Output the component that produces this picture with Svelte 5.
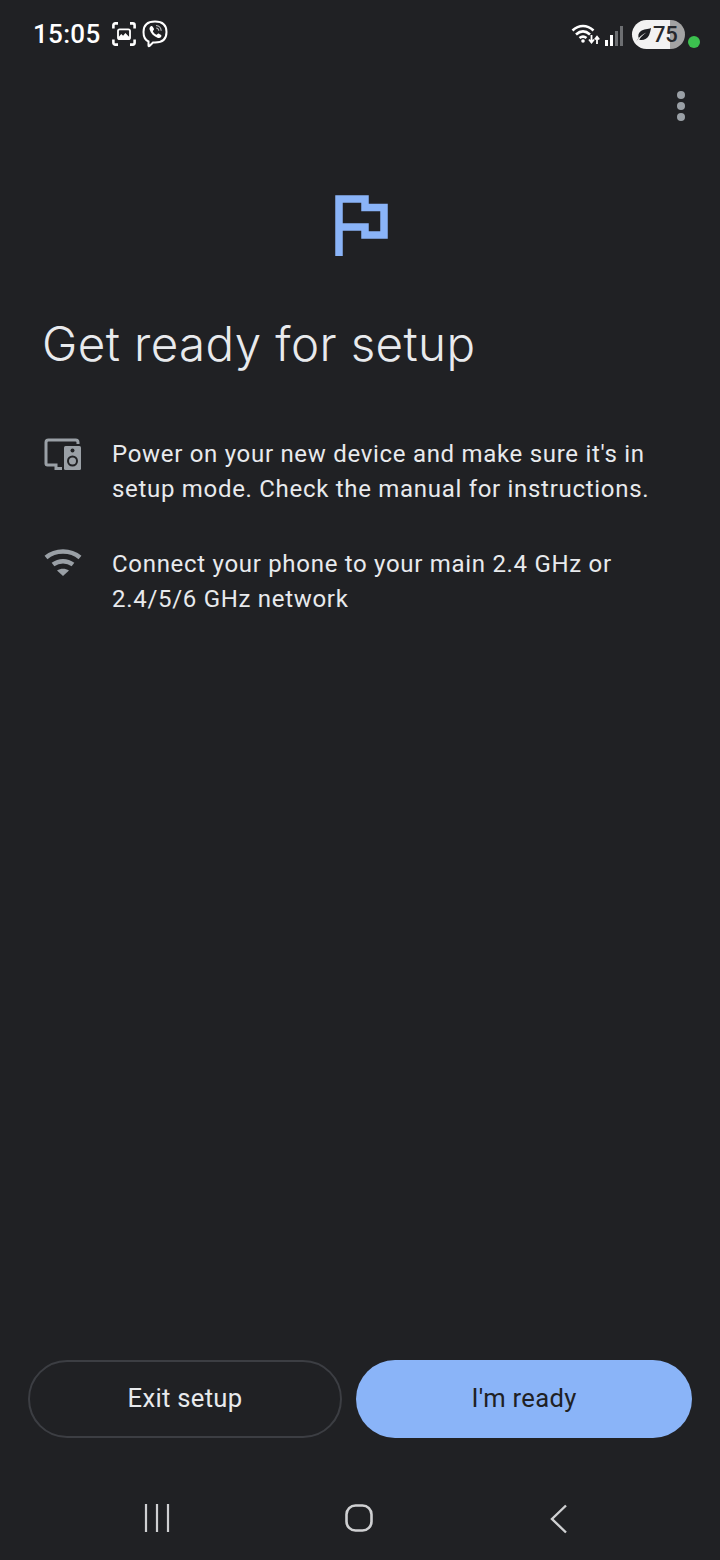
<script lang="ts">
	const steps = [
		{ icon: "device", lines: ["Power on your new device and make sure it's in", "setup mode. Check the manual for instructions."] },
		{ icon: "wifi", lines: ["Connect your phone to your main 2.4 GHz or", "2.4/5/6 GHz network"] },
	];
</script>

<div class="page">
	<header class="status">
		<div class="status-left">
			<span class="time">15:05</span>
			<svg class="ic-shot" width="24" height="24" viewBox="0 0 26 26" fill="none">
				<path d="M1.500 7V3.500a2 2 0 0 1 2-2H6.500M19.500 1.500h3a2 2 0 0 1 2 2V7M24.500 19v3.500a2 2 0 0 1-2 2h-3M6.500 24.500h-3a2 2 0 0 1-2-2V19" stroke="#fff" stroke-width="2.800" />
				<rect x="6.500" y="8" width="13" height="10.500" rx="1.800" stroke="#fff" stroke-width="2" />
				<path d="M6.500 17l3.500-4 2 2 2.500-3 5 5v1.500h-13z" fill="#fff" />
			</svg>
			<svg class="ic-viber" width="26" height="28" viewBox="0 0 26 28" fill="none">
				<path d="M13 1.500c6.800 0 11.500 3 11.500 10.500 0 7-4.500 10.500-11.500 10.500h-2l-3.500 3.500c-.6.500-1 .2-1-.5v-4C3 20 1.500 16.500 1.500 12 1.500 4.500 6.200 1.500 13 1.500z" stroke="#fff" stroke-width="2" />
				<path d="M8.500 6.500c1-.8 1.800-.5 2.400.5l.9 1.500c.4.800.2 1.300-.5 1.900-.5.400-.5.900-.1 1.600.7 1.200 1.600 2 2.700 2.600.6.300 1 .2 1.400-.3.600-.7 1.200-.9 2-.4l1.400.9c.9.600 1 1.300.3 2.200-.8 1-1.800 1.300-3 .9-4.200-1.500-7.200-4.400-8.400-8.400-.3-1.200.1-2.200.9-3z" fill="#fff" />
				<path d="M14 5.500c3 .2 5 2.200 5.200 5.300M14.200 8c1.600.1 2.500 1.100 2.600 2.700" stroke="#b9babc" stroke-width="1.200" />
			</svg>
		</div>
		<div class="status-right">
			<svg class="ic-wifi-small" width="29" height="24" viewBox="0 0 29 24" fill="none">
				<path d="M1.500 8.500C8 2.500 16 2.500 22.500 8.500M5 12.500c4.500-4 9.500-4 14 0M8.500 16c2.500-2 4.500-2 7 0" stroke="#fff" stroke-width="2.600" />
				<circle cx="12" cy="19" r="1.800" fill="#fff" />
				<path d="M20.500 13v7M18 17.500l2.500 3 2.500-3M26 22v-7M23.800 17.500l2.200-2.800 2.200 2.800" stroke="#fff" stroke-width="1.800" />
			</svg>
			<div class="signal">
				<span class="bar on" style="height:6px"></span>
				<span class="bar on" style="height:11px"></span>
				<span class="bar" style="height:15px"></span>
				<span class="bar" style="height:20px"></span>
			</div>
			<div class="battery">
				<svg width="17" height="17" viewBox="0 0 18 18">
					<path d="M1 16.500C4 12 8 8.500 12 7 8.500 9.500 6 12 4.500 14.500c4 1 8.500-.5 10.500-5 1-2.500 1.500-5 2-7.500-3 1.500-8 1-11 3.500-2.500 2-3 5-2 7.500L1.500 16z" fill="#1d1f23" />
				</svg>
				<span>75</span>
			</div>
			<span class="dot"></span>
		</div>
	</header>

	<div class="menu-row">
		<div class="menu"><span></span><span></span><span></span></div>
	</div>

	<main class="content">
		<div class="flag">
			<svg width="54" height="61" viewBox="0 0 54 61" fill="none">
				<path d="M4 61V4h26v8.500h19V40H30v-8H4" stroke="#8ab4f8" stroke-width="7.500" />
			</svg>
		</div>
		<h1>Get ready for setup</h1>
		<ul class="steps">
			{#each steps as step}
				<li>
					<div class="step-icon">
						{#if step.icon === "device"}
							<svg width="38" height="32" viewBox="0 0 38 32" fill="none">
								<path d="M18 30.500h-6V27H3.500A1.500 1.500 0 0 1 2 25.500V4.500C2 3.100 3.100 2 4.500 2h27C32.900 2 34 3.100 34 4.500V6" stroke="#9aa0a6" stroke-width="3" />
								<path d="M21.500 8h14a1.500 1.500 0 0 1 1.500 1.500v21a1.500 1.500 0 0 1-1.500 1.500h-14a1.500 1.500 0 0 1-1.500-1.500v-21A1.500 1.500 0 0 1 21.500 8z" fill="#9aa0a6" />
								<circle cx="28.500" cy="12.500" r="2" fill="#202124" />
								<circle cx="28.500" cy="23" r="5.500" fill="#202124" />
								<circle cx="28.500" cy="23" r="3.500" fill="#9aa0a6" />
							</svg>
						{:else}
							<svg width="38" height="28" viewBox="0 0 38 28" fill="none">
								<path d="M2 9.500C11.500 1.500 26.500 1.500 36 9.500" stroke="#9aa0a6" stroke-width="4.500" />
								<path d="M9 16.500c6-4.500 14-4.500 20 0" stroke="#9aa0a6" stroke-width="4.500" />
								<path d="M13 22.500c3.800-2.200 8.200-2.200 12 0L19 28z" fill="#9aa0a6" />
							</svg>
						{/if}
					</div>
					<p>
						{#each step.lines as line}
							<span class="line">{line}</span>
						{/each}
					</p>
				</li>
			{/each}
		</ul>
	</main>

	<div class="actions">
		<button class="btn secondary">Exit setup</button>
		<button class="btn primary">I'm ready</button>
	</div>

	<nav class="navbar">
		<svg width="28" height="28" viewBox="0 0 28 28" fill="none" stroke="#cfd0d2" stroke-width="2.200">
			<path d="M3 0v28M14 0v28M25 0v28" />
		</svg>
		<svg width="28" height="28" viewBox="0 0 28 28" fill="none" stroke="#cfd0d2" stroke-width="2.600">
			<rect x="1.500" y="1.500" width="25" height="25" rx="9" />
		</svg>
		<svg class="back" width="20" height="30" viewBox="0 0 20 30" fill="none" stroke="#cfd0d2" stroke-width="2.400">
			<path d="M17 1.500 3 15l14 13.500" />
		</svg>
	</nav>
</div>

<style>
	:global(body) {
		margin: 0;
		background: #202124;
	}

	.page {
		width: 720px;
		height: 1560px;
		background: #202124;
		display: flex;
		flex-direction: column;
		font-family: Roboto, "Liberation Sans", sans-serif;
		color: #e8eaed;
		overflow: hidden;
	}

	.status {
		height: 70px;
		flex: none;
		box-sizing: border-box;
		padding: 18px 20px 0 33px;
		display: flex;
		justify-content: space-between;
		align-items: flex-start;
	}

	.status-left {
		display: flex;
		align-items: center;
		height: 32px;
	}

	.time {
		font-size: 26px;
		font-weight: 500;
		color: #fff;
		letter-spacing: 0.3px;
		margin-right: 12px;
	}

	.ic-viber {
		margin-left: 6px;
	}

	.status-right {
		display: flex;
		align-items: center;
		height: 32px;
	}

	.signal {
		display: flex;
		align-items: flex-end;
		gap: 2px;
		height: 20px;
		margin-left: 5px;
		margin-right: 9px;
		margin-top: 4px;
	}

	.bar {
		width: 3px;
		background: #6d6f72;
	}

	.bar.on {
		background: #fff;
	}

	.battery {
		width: 53px;
		height: 29px;
		box-sizing: border-box;
		padding-left: 3px;
		border-radius: 15px;
		background: linear-gradient(90deg, #f2f2f2 0 72%, #a3a3a3 72%);
		display: flex;
		align-items: center;
		gap: 1px;
		color: #26282c;
		font-size: 22px;
		font-weight: 500;
		letter-spacing: -0.3px;
	}

	.dot {
		width: 12px;
		height: 12px;
		border-radius: 50%;
		background: #3cc14f;
		margin-left: 3px;
		margin-top: 16px;
	}

	.menu-row {
		flex: none;
		height: 60px;
		display: flex;
		justify-content: flex-end;
		padding-right: 35px;
	}

	.menu {
		display: flex;
		flex-direction: column;
		gap: 3px;
		padding-top: 21px;
	}

	.menu span {
		width: 8px;
		height: 8px;
		border-radius: 50%;
		background: #9aa0a6;
	}

	.content {
		flex: 1;
		display: flex;
		flex-direction: column;
	}

	.flag {
		display: flex;
		justify-content: center;
		padding: 65px 0 0 4px;
		height: 61px;
	}

	h1 {
		margin: 58px 0 0 42px;
		font-family: Inter, "Open Sans", sans-serif;
		font-weight: 300;
		font-size: 47.500px;
		line-height: 60px;
		letter-spacing: 0.400px;
		color: #e8eaed;
	}

	.steps {
		list-style: none;
		margin: 63px 0 0;
		padding: 0 0 0 44px;
		display: flex;
		flex-direction: column;
		gap: 41px;
	}

	li {
		display: flex;
		align-items: flex-start;
	}

	.step-icon {
		width: 68px;
		flex: none;
		padding-top: 1px;
	}

	p {
		margin: 0;
		font-size: 24px;
		line-height: 34.500px;
		letter-spacing: 0.7px;
		color: #e8eaed;
	}

	.line {
		display: block;
		white-space: nowrap;
	}

	.actions {
		flex: none;
		display: flex;
		gap: 14px;
		padding: 0 28px;
		margin-bottom: 66px;
	}

	.btn {
		height: 78px;
		border-radius: 39px;
		font-family: Roboto, sans-serif;
		font-size: 25.600px;
		font-weight: 400;
		letter-spacing: 0.3px;
		padding: 0 0 2px;
	}

	.secondary {
		width: 314px;
		background: transparent;
		border: 2px solid #3c3e43;
		color: #e8eaed;
	}

	.primary {
		width: 336px;
		background: #8ab4f8;
		border: none;
		color: #202124;
	}

	.navbar {
		flex: none;
		height: 56px;
		display: flex;
		justify-content: space-between;
		align-items: flex-start;
		padding: 0 151px 0 143px;
	}

	.back {
		margin-left: 2px;
	}
</style>
